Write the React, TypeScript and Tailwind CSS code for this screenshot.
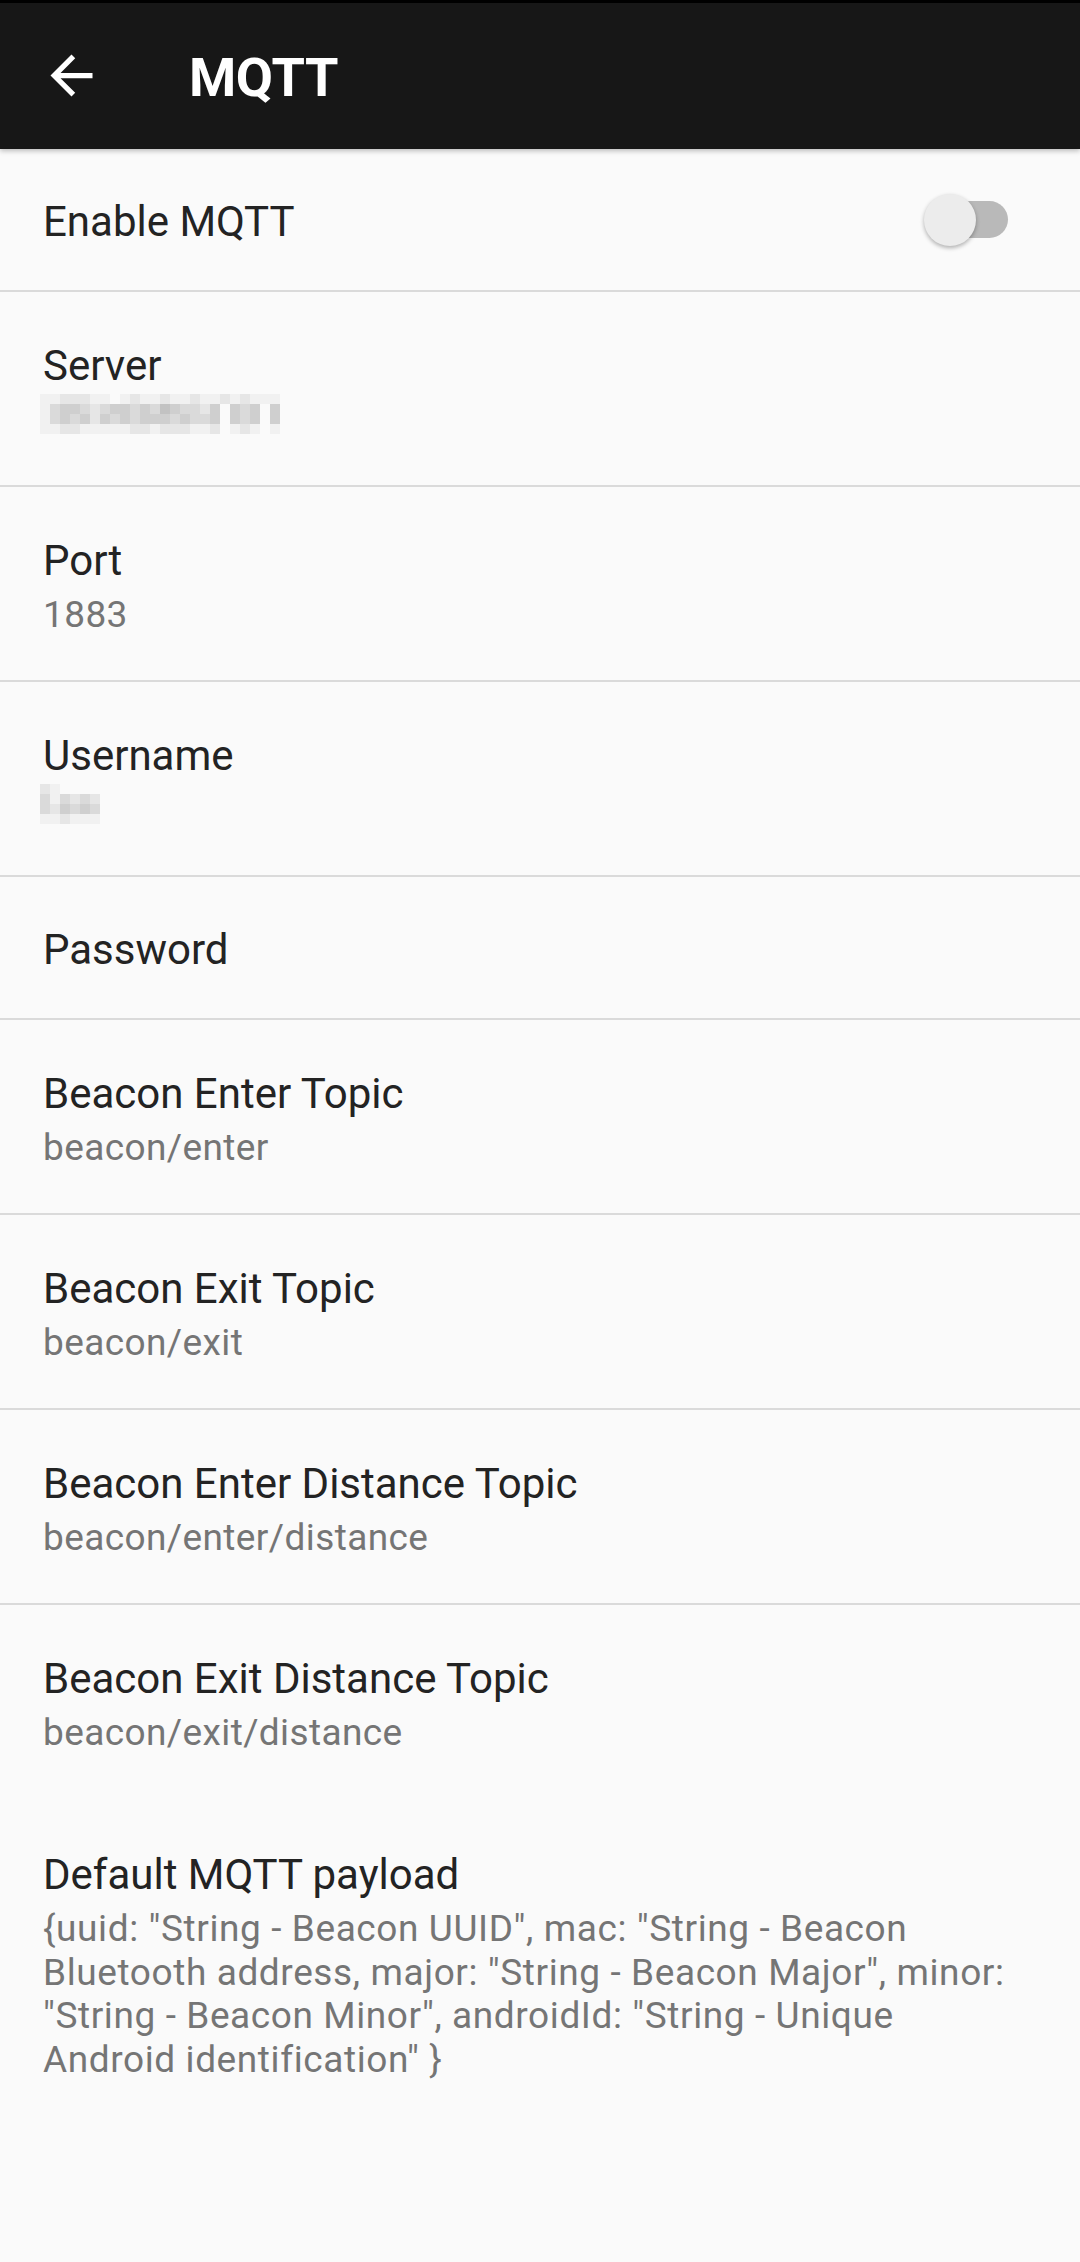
import { Fragment } from "react";

const shade: Record<string, string> = {
  "0": "bg-transparent",
  "1": "bg-[#f1f1f1]",
  "2": "bg-[#e6e6e6]",
  "3": "bg-[#dadada]",
  "4": "bg-[#cfcfcf]",
  "5": "bg-[#c2c2c2]",
};

// pixelated (redacted) values
const serverMosaic = [
  "112221101211211211212111",
  "134432344343543324043404",
  "134342434344434334043404",
  "112211111221222112012101",
];

const usernameMosaic = ["2100000", "3132320", "3243430", "1121110"];

function Mosaic({ rows }: { rows: string[] }) {
  return (
    <div className="flex flex-col">
      {rows.map((row, i) => (
        <div key={i} className="flex">
          {row.split("").map((c, j) => (
            <div key={j} className={`w-[10px] h-[10px] ${shade[c]}`} />
          ))}
        </div>
      ))}
    </div>
  );
}

function Divider() {
  return <div className="h-[2px] bg-[#dadada]" />;
}

function TwoLineRow({ title, children }: { title: string; children: React.ReactNode }) {
  return (
    <div className="h-[193px] px-[43px] pt-[49px]">
      <div className="text-[42px] leading-[50px] text-[#232323]">{title}</div>
      <div className="mt-[7px] text-[37px] leading-[43px] tracking-[0.4px] text-[#757575]">{children}</div>
    </div>
  );
}

const topics = [
  { title: "Beacon Enter Topic", value: "beacon/enter" },
  { title: "Beacon Exit Topic", value: "beacon/exit" },
  { title: "Beacon Enter Distance Topic", value: "beacon/enter/distance" },
  { title: "Beacon Exit Distance Topic", value: "beacon/exit/distance" },
];

export default function App() {
  return (
    <div
      className="min-h-[2262px] bg-[#fafafa] antialiased"
      style={{ fontFamily: "Roboto, 'Noto Sans', sans-serif" }}
    >
      {/* Toolbar */}
      <header className="relative z-10 h-[149px] bg-[#171717] border-t-[3px] border-black flex items-center shadow-[0_2px_5px_rgba(0,0,0,0.25)]">
        <div className="w-[63px] h-[63px] ml-[40px] mt-[-1px]">
          <svg viewBox="0 0 24 24" className="w-full h-full" fill="#ffffff">
            <path d="M20 11H7.83l5.59-5.59L12 4l-8 8 8 8 1.41-1.41L7.83 13H20v-2z" />
          </svg>
        </div>
        <h1 className="ml-[86px] pt-[4px] text-[54px] leading-none font-bold text-white tracking-[-0.5px]">
          MQTT
        </h1>
      </header>

      {/* Enable MQTT */}
      <div className="h-[141px] px-[43px] flex items-center justify-between">
        <div className="pt-[5px] text-[42px] leading-[50px] text-[#232323]">Enable MQTT</div>
        <div className="relative w-[84px] h-[52px] mr-[29px] flex items-center">
          <div className="ml-[6px] w-[78px] h-[37px] rounded-full bg-[#b9b9b9]" />
          <div className="absolute left-0 top-0 w-[52px] h-[52px] rounded-full bg-[#ececec] shadow-[0_2px_4px_rgba(0,0,0,0.3)]" />
        </div>
      </div>
      <Divider />

      <TwoLineRow title="Server">
        <div className="ml-[-3px] mt-[-4px]">
          <Mosaic rows={serverMosaic} />
        </div>
      </TwoLineRow>
      <Divider />

      <TwoLineRow title="Port">1883</TwoLineRow>
      <Divider />

      <TwoLineRow title="Username">
        <div className="ml-[-3px] mt-[-4px]">
          <Mosaic rows={usernameMosaic} />
        </div>
      </TwoLineRow>
      <Divider />

      <div className="h-[141px] px-[43px] flex items-center">
        <div className="pt-[5px] text-[42px] leading-[50px] text-[#232323]">Password</div>
      </div>
      <Divider />

      {topics.map((t, i) => (
        <Fragment key={t.title}>
          <TwoLineRow title={t.title}>{t.value}</TwoLineRow>
          {i < topics.length - 1 && <Divider />}
        </Fragment>
      ))}

      {/* Payload */}
      <div className="px-[43px] pt-[52px] pb-[60px]">
        <div className="text-[42px] leading-[50px] text-[#232323]">Default MQTT payload</div>
        <div className="mt-[7px] text-[37px] leading-[43.5px] tracking-[0.6px] text-[#757575]">
          {'{uuid: "String - Beacon UUID", mac: "String - Beacon'}
          <br />
          {'Bluetooth address, major: "String - Beacon Major", minor:'}
          <br />
          {'"String - Beacon Minor", androidId: "String - Unique'}
          <br />
          {'Android identification" }'}
        </div>
      </div>
    </div>
  );
}
